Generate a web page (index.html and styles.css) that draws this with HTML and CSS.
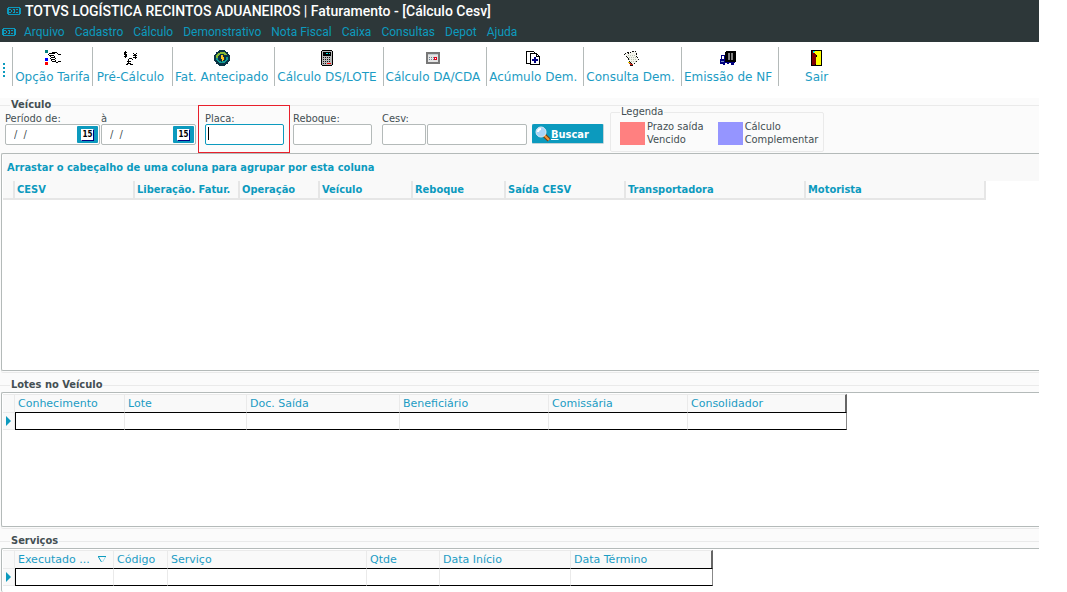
FILE: index.html
```html
<!DOCTYPE html>
<html lang="pt-BR">
<head>
  <meta charset="UTF-8">
  <meta name="viewport" content="width=device-width, initial-scale=1.0">
  <title>TOTVS LOGÍSTICA RECINTOS ADUANEIROS | Faturamento</title>
  <link rel="stylesheet" href="styles.css">
</head>
<body>
  <header>
    <div class="titulo">
      <svg class="logo" width="14" height="8" viewBox="0 0 14 8"><path d="M1 0h12v1H1zM1 7h12v1H1zM0 1h1v6H0zM13 1h1v6h-1zM1 1h1v6H1zM12 1h1v6h-1zM2 2h2v1H2zM2 5h2v1H2zM4 3h1v2H4zM6 2h2v1H6zM6 5h2v1H6zM7 3h1v2H7zM9 2h2v1H9zM9 5h2v1H9z"/></svg>
      <h1>TOTVS LOGÍSTICA RECINTOS ADUANEIROS | Faturamento - [Cálculo Cesv]</h1>
    </div>
    <nav class="menu">
      <svg class="logo" width="14" height="8" viewBox="0 0 14 8"><path d="M1 0h12v1H1zM1 7h12v1H1zM0 1h1v6H0zM13 1h1v6h-1zM1 1h1v6H1zM12 1h1v6h-1zM2 2h2v1H2zM2 5h2v1H2zM4 3h1v2H4zM6 2h2v1H6zM6 5h2v1H6zM7 3h1v2H7zM9 2h2v1H9zM9 5h2v1H9z"/></svg>
      <ul>
        <li><a href="#">Arquivo</a></li>
        <li><a href="#">Cadastro</a></li>
        <li><a href="#">Cálculo</a></li>
        <li><a href="#">Demonstrativo</a></li>
        <li><a href="#">Nota Fiscal</a></li>
        <li><a href="#">Caixa</a></li>
        <li><a href="#">Consultas</a></li>
        <li><a href="#">Depot</a></li>
        <li><a href="#">Ajuda</a></li>
      </ul>
    </nav>
  </header>

  <div class="toolbar">
    <span class="alca"></span>
    <button type="button">
      <svg width="16" height="16" viewBox="0 0 16 16">
        <path fill="#008080" d="M0 0h3v3H0z"/><path fill="#0000ff" d="M0 8h3v3H0z"/><path fill="#ff0000" d="M0 12h3v3H0z"/>
        <path d="M4 3h6v1H4zM3 4h1v1H3zM4 5h5v1H4zM7 2h5v1H7zM12 3h1v1h-1zM13 4h3v1h-3zM9 6h1v1H9zM5 6h1v1H5zM6 7h4v1H6zM5 8h1v1H5zM6 9h4v1H6zM6 10h1v1H6zM7 11h4v1H7zM10 8h1v1h-1zM10 10h1v1h-1zM11 12h2v1h-2zM13 11h3v1h-3z"/>
      </svg>
      Opção Tarifa
    </button>
    <button type="button">
      <svg width="16" height="16" viewBox="0 0 16 16">
        <path d="M2 1h1v7H2zM1 2h3v1H1zM1 3h1v1H1zM1 4h3v1H1zM3 5h1v1H3zM1 6h3v1H1zM10 3h1v1h-1zM13 3h1v1h-1zM11 4h2v1h-2zM10 5h4v1h-4zM10 7h4v1h-4zM12 4h1v5h-1zM6 8h3v1H6zM5 9h1v5H5zM9 9h1v1H9zM4 11h4v1H4zM4 13h1v1H4zM3 14h2v1H3zM6 13h2v1H6zM7 14h3v1H7z"/>
      </svg>
      Pré-Cálculo
    </button>
    <button type="button">
      <svg width="16" height="16" viewBox="0 0 16 16">
        <circle cx="8" cy="8" r="8" fill="#0a3344"/>
        <path fill="none" stroke="#86b832" stroke-width="2" d="M3 8a5 5 0 0 1 9-3"/>
        <path fill="none" stroke="#109a94" stroke-width="2" d="M3 8a5 5 0 0 0 10-1"/>
        <path fill="#ffc220" d="M7 5h2v2h1v3H9v1H8V9H7z"/>
      </svg>
      Fat. Antecipado
    </button>
    <button type="button">
      <svg width="16" height="16" viewBox="0 0 16 16">
        <path d="M3 0h10v1h1v14h-1v1H3v-1H2V1h1z"/><path fill="#b8b8b8" d="M3 1h10v14H3z"/><path d="M4 2h8v4H4z"/>
        <path fill="#00e0e0" d="M7 3h2v1H7zM10 3h1v1h-1z"/>
        <path fill="none" stroke="#111" stroke-dasharray="1 1" d="M4 7.500h8M4 9.500h8M4 11.500h8M4 13.500h3"/>
        <path fill="#f00" d="M8 13h4v1H8z"/>
      </svg>
      Cálculo DS/LOTE
    </button>
    <button type="button">
      <svg width="16" height="16" viewBox="0 0 16 16">
        <path fill="#777" d="M1 2h14v12H1z"/><path fill="#e4e4e4" d="M3 5h10v7H3z"/>
        <path fill="none" stroke="#6d8294" stroke-dasharray="1 1" d="M4 7.500h5M4 9.500h5"/>
        <path fill="#c3ccd0" d="M3 4h10v1H3z"/><path fill="#e0001b" d="M9 7h3v3H9z"/><path fill="#fff" d="M10 8h1v1h-1z"/>
      </svg>
      Cálculo DA/CDA
    </button>
    <button type="button">
      <svg width="16" height="16" viewBox="0 0 16 16">
        <path fill="#fff" stroke="#000" d="M1.500 1.500h7l2 2v10h-9z"/>
        <path fill="#fff" stroke="#000" d="M5.500 3.500h6l3 3v8h-9z"/>
        <path fill="none" stroke="#000" d="M11.500 3.500v3h3"/>
        <path fill="#000080" d="M9 7h2v2h2v2h-2v2H9v-2H7V9h2z"/>
      </svg>
      Acúmulo Dem.
    </button>
    <button type="button">
      <svg width="16" height="16" viewBox="0 0 16 16">
        <path fill="#f4f4ec" stroke="#111" stroke-dasharray="2 1" d="M1.500 4.500l3-2 2 1 5-3 2 2v4l2 3-5 5-3-1-2-5z"/>
        <path fill="none" stroke="#b9c5b3" stroke-dasharray="1 1" d="M5 5.500h7M6 7.500h7M6 9.500h7M8 11.500h5"/>
        <path fill="#d02818" d="M6 13h2v1h2v1H7v-1H6z"/><path fill="#d9cc00" d="M5 12h2v1H5z"/><path fill="#111" d="M7 15h3v1H7z"/>
      </svg>
      Consulta Dem.
    </button>
    <button type="button">
      <svg width="16" height="16" viewBox="0 0 16 16">
        <path d="M5 2h1V1h10v11H5z"/><path fill="#808080" d="M8 3h2v7H8zM11 3h2v7h-2z"/>
        <path fill="#000080" d="M1 5h4v7h10v1h-1v2h-3v-2H9v1H7v-1H5v2H3v-1H0V9h1z"/><path fill="#fff" d="M2 6h2v3H2z"/><path fill="#7d94c8" d="M1 11h3v1H1z"/>
      </svg>
      Emissão de NF
    </button>
    <button type="button">
      <svg width="16" height="16" viewBox="0 0 16 16">
        <path d="M2 0h11v16H2z"/><path fill="#ffff00" d="M4 1h8v14H7z"/><path fill="#800000" d="M3 1l4 3v10H6v1H3z"/>
        <path fill="#00e0e0" d="M4 1h2v1H4zM4 2h1v1H4z"/><path d="M7 5h1v2H7z"/>
      </svg>
      Sair
    </button>
  </div>

  <main>
    <fieldset class="painel">
      <legend>Veículo</legend>
      <form class="filtro">
        <div class="campo">
          <label for="de">Período de:</label>
          <div class="data">
            <input type="text" id="de" value="/  /">
            <button type="button" aria-label="Calendário"><span>15</span></button>
          </div>
        </div>
        <div class="campo">
          <label for="ate">à</label>
          <div class="data">
            <input type="text" id="ate" value="/  /">
            <button type="button" aria-label="Calendário"><span>15</span></button>
          </div>
        </div>
        <div class="campo destaque">
          <label for="placa">Placa:</label>
          <input type="text" id="placa">
        </div>
        <div class="campo">
          <label for="reboque">Reboque:</label>
          <input type="text" id="reboque">
        </div>
        <div class="campo cesv">
          <label for="cesv">Cesv:</label>
          <div class="par">
            <input type="text" id="cesv" class="curto">
            <input type="text" class="longo" aria-label="Cesv">
          </div>
        </div>
        <button type="button" class="buscar">
          <svg width="16" height="16" viewBox="0 0 16 16">
            <path stroke="#7a3c10" stroke-width="4" d="M9 9l5 5"/><path stroke="#f09a3c" stroke-width="2" d="M9 9l5 5"/>
            <circle cx="6" cy="6" r="5" fill="#a9d4f8" stroke="#dfe9f2"/><path fill="none" stroke="#fff" stroke-width="2" d="M3 6a3 3 0 0 1 3-3"/>
          </svg>
          <span><u>B</u>uscar</span>
        </button>
        <fieldset class="legenda">
          <legend>Legenda</legend>
          <div class="item"><span class="cor vencido"></span><p>Prazo saída<br>Vencido</p></div>
          <div class="item"><span class="cor complementar"></span><p>Cálculo<br>Complementar</p></div>
        </fieldset>
      </form>
    </fieldset>

    <div class="grade grade-veiculo">
      <div class="agrupar">Arrastar o cabeçalho de uma coluna para agrupar por esta coluna</div>
      <table class="tab-veiculo">
        <colgroup>
          <col class="c12"><col class="c120"><col class="c105"><col class="c80"><col class="c93"><col class="c93"><col class="c120"><col class="c180"><col class="c180">
        </colgroup>
        <thead>
          <tr><th></th><th>CESV</th><th>Liberação. Fatur.</th><th>Operação</th><th>Veículo</th><th>Reboque</th><th>Saída CESV</th><th>Transportadora</th><th>Motorista</th></tr>
        </thead>
      </table>
    </div>

    <fieldset class="painel sub">
      <legend>Lotes no Veículo</legend>
    </fieldset>
    <div class="grade grade-lotes">
      <table class="tab-linha">
        <colgroup>
          <col class="c12"><col class="c110"><col class="c122"><col class="c153"><col class="c149"><col class="c139"><col class="c159">
        </colgroup>
        <thead>
          <tr><th></th><th>Conhecimento</th><th>Lote</th><th>Doc. Saída</th><th>Beneficiário</th><th>Comissária</th><th>Consolidador</th></tr>
        </thead>
        <tbody>
          <tr><td class="marca"><span></span></td><td></td><td></td><td></td><td></td><td></td><td></td></tr>
        </tbody>
      </table>
    </div>

    <fieldset class="painel sub">
      <legend>Serviços</legend>
    </fieldset>
    <div class="grade grade-servicos">
      <table class="tab-linha">
        <colgroup>
          <col class="c12"><col class="c99"><col class="c54"><col class="c199"><col class="c73"><col class="c131"><col class="c142">
        </colgroup>
        <thead>
          <tr>
            <th></th>
            <th><div class="ordenado">Executado ...<svg width="8" height="7" viewBox="0 0 8 7"><path fill="none" stroke="#0c9abe" d="M0 0.500h8M0.500 1l3 5"/><path fill="none" stroke="#9fdcec" d="M7.500 1l-3 5"/></svg></div></th>
            <th>Código</th><th>Serviço</th><th>Qtde</th><th>Data Início</th><th>Data Término</th>
          </tr>
        </thead>
        <tbody>
          <tr><td class="marca"><span></span></td><td></td><td></td><td></td><td></td><td></td><td></td></tr>
        </tbody>
      </table>
    </div>
  </main>
</body>
</html>
```
FILE: styles.css
```css
* {
  box-sizing: border-box;
}

body {
  margin: 0;
  padding-right: 28px;
  height: 100vh;
  display: flex;
  flex-direction: column;
  overflow: hidden;
  background-color: #fff;
  color: #444f53;
  font-family: "DejaVu Sans Condensed", "DejaVu Sans", sans-serif;
  font-size: 11px;
}

button,
input {
  font: inherit;
  color: inherit;
  margin: 0;
}

/* Title bar and menu */
header {
  background-color: #2d3739;
  height: 42px;
  font-family: Roboto, sans-serif;
}

.titulo,
.menu {
  display: flex;
  align-items: center;
  height: 21px;
}

.titulo {
  padding-left: 7px;
  gap: 4px;
}

h1 {
  margin: 0;
  color: #fff;
  font-size: 14px;
  font-weight: 500;
  white-space: nowrap;
}

.menu {
  padding-left: 2px;
  gap: 8px;
}

.menu ul {
  display: flex;
  gap: 10px;
  margin: 0;
  padding: 0;
  list-style: none;
}

.menu a {
  color: #0c9abe;
  font-size: 12px;
  text-decoration: none;
}

.logo {
  fill: #0c9abe;
  shape-rendering: crispEdges;
}

/* Toolbar */
.toolbar {
  display: flex;
  align-items: flex-start;
  height: 56px;
  padding: 5px 0 0 3px;
}

.alca {
  width: 2px;
  height: 14px;
  margin: 16px 7px 0 0;
  background: repeating-linear-gradient(#0c9abe 0 2px, transparent 2px 4px);
}

.toolbar button {
  display: flex;
  flex-direction: column;
  align-items: center;
  gap: 4px;
  min-width: 80px;
  height: 39px;
  padding: 3px 6px 0 2px;
  border: none;
  border-left: 1px solid #b4bab9;
  background: none;
  color: #1c9cc4;
  font-family: "DejaVu Sans", sans-serif;
  font-size: 12px;
  line-height: 14px;
  white-space: nowrap;
}

.toolbar button:first-of-type {
  padding-right: 2px;
}

.toolbar svg {
  flex: none;
  shape-rendering: crispEdges;
}

/* Panels */
main {
  flex: 1;
  display: flex;
  flex-direction: column;
  background-color: #fbfbfb;
}

fieldset {
  min-width: 0;
  margin: 0;
  padding: 0;
  border: none;
}

.painel {
  border-top: 1px solid #eaeaea;
}

.painel > legend {
  margin-left: 10px;
  padding: 0 1px;
  font-weight: bold;
  line-height: 14px;
}

.filtro {
  display: flex;
  align-items: flex-start;
  height: 41px;
  padding-left: 5px;
}

.campo {
  position: relative;
  margin-right: 1px;
}

.campo label {
  display: block;
  padding-top: 1px;
  line-height: 11px;
  white-space: nowrap;
}

.campo input {
  display: block;
  width: 79px;
  height: 21px;
  padding: 0 8px;
  border: 1px solid #b4bab9;
  border-radius: 2px;
  background-color: #fff;
}

.data {
  position: relative;
}

.campo .data input {
  width: 95px;
}

.data button {
  position: absolute;
  top: 2px;
  right: 2px;
  display: flex;
  align-items: center;
  justify-content: center;
  width: 21px;
  height: 17px;
  padding: 0;
  border: none;
  border-radius: 1px;
  background-color: #0c9abe;
}

.data button span {
  width: 13px;
  height: 12px;
  border: 1px solid #fff;
  border-right-color: #000080;
  border-bottom-color: #000080;
  background-color: #fff;
  color: #000;
  font-size: 8px;
  font-weight: bold;
  line-height: 10px;
}

.destaque {
  margin: 0 9px 0 8px;
}

.destaque::after {
  content: "";
  position: absolute;
  inset: -7px -6px -8px -7px;
  border: 1px solid #e8202c;
  pointer-events: none;
}

/* the field in focus, with its text cursor */
.campo.destaque input {
  border-color: #0c9abe;
  background: linear-gradient(#000, #000) 2px 2px / 1px 13px no-repeat #fff;
}

.cesv {
  margin: 0 5px 0 9px;
}

.par {
  display: flex;
  gap: 1px;
}

.par .curto {
  width: 44px;
}

.par .longo {
  width: 100px;
}

.buscar {
  display: flex;
  align-items: center;
  height: 20px;
  width: 72px;
  margin: 12px 6px 0 0;
  padding: 0 2px;
  border: 1px solid #0c9abe;
  border-right-color: #c3d4d8;
  border-bottom-color: #c3d4d8;
  border-radius: 2px;
  background-color: #0c9abe;
  color: #fff;
  font-weight: bold;
}

.legenda {
  display: flex;
  gap: 14px;
  height: 46px;
  margin-top: -6px;
  padding: 1px 5px 0 9px;
  border: 1px solid #eaeaea;
  border-radius: 2px;
}

.legenda legend {
  padding: 0 1px;
  line-height: 12px;
}

.item {
  display: flex;
  gap: 2px;
}

.item p {
  margin: 0;
  padding-top: 1px;
  line-height: 13px;
  white-space: nowrap;
}

.cor {
  width: 25px;
  height: 23px;
  margin-top: 3px;
}

.vencido {
  background-color: #ff8080;
}

.complementar {
  background-color: #9595ff;
}

.sub {
  height: 14px;
  margin-top: 7px;
}

/* Grids */
.grade {
  padding: 1px 0 0 1px;
  margin-left: 1px;
  border: 1px solid #b4bab9;
  border-right: none;
  border-radius: 2px 0 0 2px;
  background-color: #fff;
  box-shadow: 0 1px 0 #fbfbfb, 0 2px 0 #eaeaea;
}

.grade-veiculo {
  height: 218px;
  padding-top: 0;
}

.grade-lotes {
  height: 135px;
}

.grade-servicos {
  flex: 1;
  border-bottom: none;
}

.agrupar {
  height: 27px;
  padding-left: 4px;
  background-color: #f9f9f9;
  color: #0c9abe;
  font-weight: bold;
  line-height: 28px;
}

table {
  width: 0;
  table-layout: fixed;
  border-collapse: separate;
  border-spacing: 0;
}

th {
  padding: 0 0 0 3px;
  background-color: #f9f9f9;
  color: #0c9abe;
  text-align: left;
  white-space: nowrap;
}

.tab-veiculo th {
  height: 19px;
  padding-left: 2px;
  border-right: 2px solid #e6e6e6;
  border-bottom: 2px solid #e6e6e6;
  line-height: 17px;
}

.tab-linha th {
  height: 18px;
  border-top: 1px solid #eaeaea;
  border-right: 1px solid #eaeaea;
  color: #1c9cc4;
  font-family: "DejaVu Sans", sans-serif;
  font-weight: normal;
  line-height: 17px;
}

.tab-linha td {
  height: 18px;
  padding: 0;
  border-top: 1px solid #000;
  border-bottom: 1px solid #000;
  border-right: 1px solid #eaeaea;
}

.tab-linha td:nth-child(2) {
  border-left: 1px solid #000;
}

.tab-linha th:last-child {
  border-right: 2px solid #666;
}

.tab-linha td:last-child {
  border-right-color: #888;
}

.tab-linha .marca {
  border-color: #eaeaea;
  background-color: #f9f9f9;
}

.marca span {
  display: block;
  width: 0;
  margin-left: 3px;
  border: 5px solid transparent;
  border-left-color: #0c9abe;
  border-right: none;
}

.ordenado {
  display: flex;
  align-items: center;
  gap: 8px;
}

.c12 { width: 12px; }
.c54 { width: 54px; }
.c73 { width: 73px; }
.c80 { width: 80px; }
.c93 { width: 93px; }
.c99 { width: 99px; }
.c105 { width: 105px; }
.c110 { width: 110px; }
.c120 { width: 120px; }
.c122 { width: 122px; }
.c131 { width: 131px; }
.c139 { width: 139px; }
.c142 { width: 142px; }
.c149 { width: 149px; }
.c153 { width: 153px; }
.c159 { width: 159px; }
.c180 { width: 180px; }
.c199 { width: 199px; }
```
